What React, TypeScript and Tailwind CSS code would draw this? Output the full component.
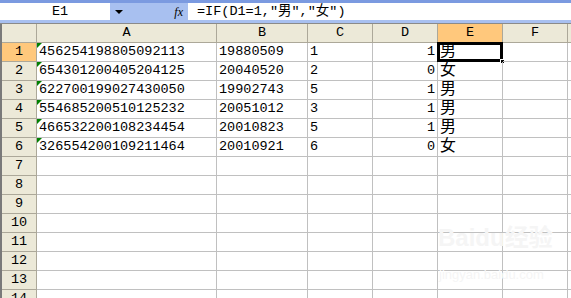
import React from 'react';

const cols = ['A', 'B', 'C', 'D', 'E', 'F', ''];

const rows: string[][] = [
  ['456254198805092113', '19880509', '1', '1', '男'],
  ['654301200405204125', '20040520', '2', '0', '女'],
  ['622700199027430050', '19902743', '5', '1', '男'],
  ['554685200510125232', '20051012', '3', '1', '男'],
  ['466532200108234454', '20010823', '5', '1', '男'],
  ['326554200109211464', '20010921', '6', '0', '女'],
];

const mono = { fontFamily: '"Liberation Mono", "Noto Sans CJK SC", monospace' };

export default function App() {
  const allRows = Array.from({ length: 14 }, (_, i) => rows[i] ?? []);

  return (
    <div className="w-[571px] h-[298px] overflow-hidden bg-white relative text-black" style={mono}>
      {/* Formula bar */}
      <div className="h-[24px] bg-[#a8c0f0] border-t-[3px] border-[#7b9ae0] border-b border-b-[#8a8a8a] flex items-start">
        <div className="w-[110px] h-[17px] bg-white flex items-center justify-center text-[13.5px] leading-none pl-[10px]">
          E1
        </div>
        <div className="w-[78px] h-[17px] flex items-center">
          <span className="ml-[5px] w-0 h-0 border-l-[4px] border-r-[4px] border-t-[4px] border-l-transparent border-r-transparent border-t-black" />
          <span
            className="ml-auto mr-[5px] italic text-[12px] leading-none"
            style={{ fontFamily: '"Liberation Serif", serif' }}
          >
            <i>f</i>x
          </span>
        </div>
        <div className="flex-1 h-[17px] bg-white flex items-center pl-[9px] text-[13.5px] leading-none whitespace-nowrap">
          =IF(D1=1,"男","女")
        </div>
      </div>

      {/* Grid */}
      <div className="grid grid-cols-[35px_180px_91px_65px_65px_65px_65px_65px] auto-rows-[19px] border-l-2 border-[#7a7a7a]">
        <div className="bg-[#ece9d8] border-r border-b border-[#aca899]" />
        {cols.map((c, k) => (
          <div
            key={k}
            className={`${c === 'E' ? 'bg-[#ffc87c]' : 'bg-[#ece9d8]'} border-r border-b border-[#aca899] flex items-center justify-center text-[13.5px] leading-none`}
          >
            {c}
          </div>
        ))}

        {allRows.map((r, i) => (
          <React.Fragment key={i}>
            <div
              className={`${i === 0 ? 'bg-[#ffc87c]' : 'bg-[#ece9d8]'} border-r border-b border-[#aca899] flex items-center justify-center text-[13.5px] leading-none`}
            >
              {i + 1}
            </div>
            {cols.map((c, j) => {
              const v = r[j] ?? '';
              const isA = j === 0 && v !== '';
              const isD = j === 3;
              const isE1 = i === 0 && j === 4;
              return (
                <div
                  key={j}
                  className={`relative border-r border-b border-[#c0c0c0] flex items-center text-[13.5px] leading-none whitespace-nowrap ${isD ? 'justify-end pr-[2px]' : 'pl-[2px]'}`}
                >
                  {isA && (
                    <span className="absolute left-0 top-0 w-0 h-0 border-t-[5px] border-r-[5px] border-t-[#008000] border-r-transparent" />
                  )}
                  <span className={j === 4 ? 'text-[16px]' : ''}>{v}</span>
                  {isE1 && (
                    <>
                      <span className="absolute -left-px -top-px -right-px -bottom-px border-[3px] border-black" />
                      <span className="absolute -right-[3px] -bottom-[3px] w-[5px] h-[5px] bg-black border border-white" />
                    </>
                  )}
                </div>
              );
            })}
          </React.Fragment>
        ))}
      </div>

      {/* Watermark */}
      <div
        className="absolute left-[438px] top-[226px] text-[24px] font-bold leading-none text-[#f5f5f5] whitespace-nowrap"
        style={{ fontFamily: '"Liberation Sans", "Noto Sans CJK SC", sans-serif' }}
      >
        Baidu经验
      </div>
      <div
        className="absolute left-[439px] top-[268px] text-[13px] leading-none text-[#f5f5f5] whitespace-nowrap"
        style={{ fontFamily: '"Liberation Sans", sans-serif' }}
      >
        jingyan.baidu.com
      </div>
    </div>
  );
}
